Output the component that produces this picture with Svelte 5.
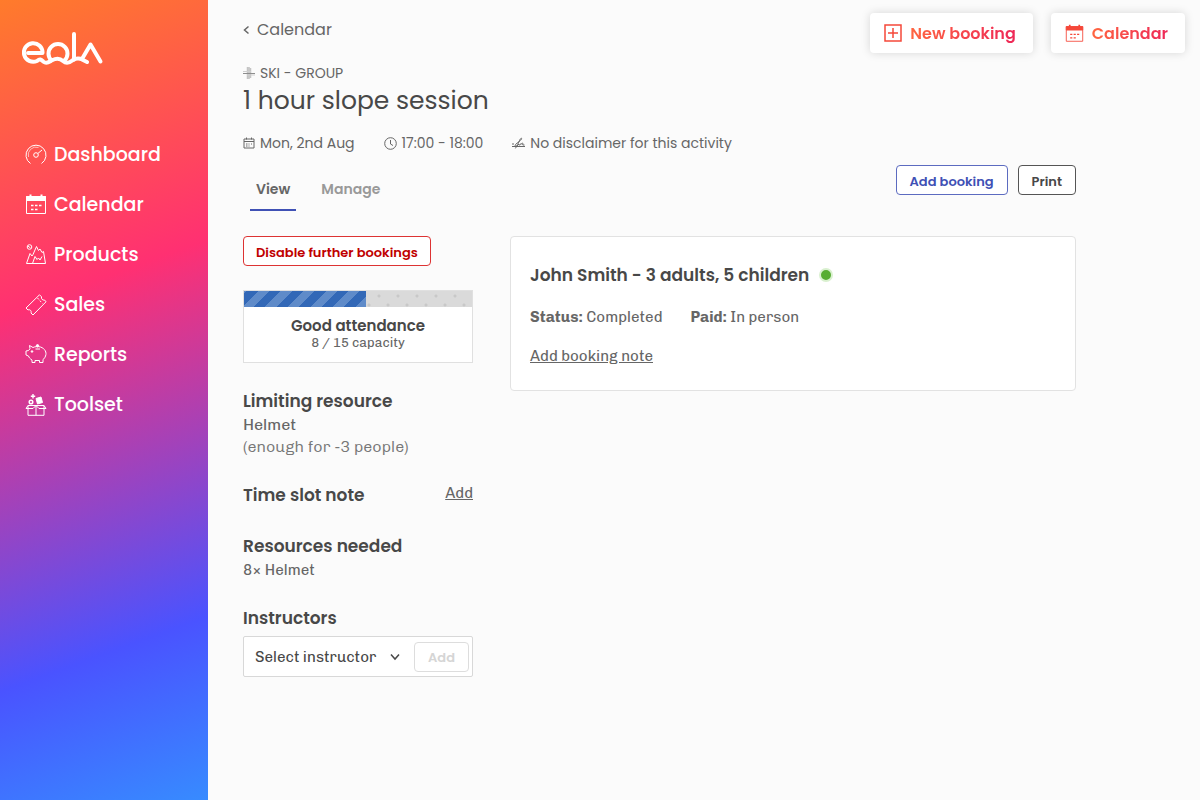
<script>
  const nav = [
    { name: "Dashboard", icon: "gauge" },
    { name: "Calendar", icon: "calendar" },
    { name: "Products", icon: "mountain" },
    { name: "Sales", icon: "ticket" },
    { name: "Reports", icon: "piggy" },
    { name: "Toolset", icon: "box" }
  ];

  const instructors = ["Select instructor"];

  let tab = $state("View");
  let instructor = $state("Select instructor");

  const booked = 8;
  const capacity = 15;
  let filled = $derived((booked / capacity) * 100);
</script>

{#snippet calendarIcon()}
  <path d="M1.5 2.500h19v17h-19z" />
  <path d="M1.5 2.500h19v4h-19z" fill="currentColor" />
  <path d="M5.5 .5v3M16.5 .5v3" stroke-width="2" />
  <path d="M6 11.500h2.500M10 11.500h2.500M14 11.500h2.500M6 15.500h2.500M10 15.500h2.500" stroke-width="1.6" />
{/snippet}

<div class="layout">
  <aside class="sidebar">
    <a class="logo" href="#home" aria-label="eola">
      <svg width="82" height="36" viewBox="0 0 82 36">
        <path d="M6 22H20.500A9.300 9.300 0 1 0 15 30C18 27.500 19 28.500 21.500 30.700C25 33.500 27.500 30.500 30 29.300C34 27.300 38 27.300 41 30C45 33.500 48 31.500 51 29C54 27 58 27 60 28.500L65 31" />
        <path d="M29.500 29.500A9.500 9.500 0 1 1 42.500 29.500" />
        <path d="M52 3V28.500M60 28L68.500 13.500L78.500 30.500" />
      </svg>
    </a>

    <nav>
      {#each nav as item}
        <a href="#{item.name.toLowerCase()}">
          <svg class="icon" width="22" height="22" viewBox="0 0 22 22">
            {#if item.icon === "gauge"}
              <path d="M5.500 19.500A10 10 0 1 1 16.500 19.500" />
              <path d="M3.500 13A7.800 7.800 0 0 1 13.500 3.500" stroke-opacity=".6" />
              <circle cx="11" cy="11" r="2.300" />
              <path d="M12.800 9.500L17 6" />
            {:else if item.icon === "calendar"}
              {@render calendarIcon()}
            {:else if item.icon === "mountain"}
              <circle cx="4.500" cy="3" r="2.300" />
              <path d="M3 2L5.500 4" />
              <path d="M1.500 19.500L5 9.500L7 12L8 10.500L11.500 2.500L13.500 6.500L15 5L17 8.500L18.500 7.500L20.500 19.500Z" />
              <path d="M7.500 19.500L10 12.500L12 15.500L13.500 14L15 16L17 12.500" />
            {:else if item.icon === "ticket"}
              <path d="M1 14L14.500 .8L16.500 2.800C16 4.800 17.500 6.500 19.500 6L21 7.800L8 21L6 19C6.800 17 5 15 3 16Z" />
              <path d="M12.500 4L17.500 9.500" stroke-dasharray="2 1.500" />
            {:else if item.icon === "piggy"}
              <path d="M4.500 1.500L8 3.500C10 2.500 13 2.300 15.500 3C20 4.500 22 8.500 20.500 12C20 13.800 19 14.800 18 15.500V18.500H14.500V16.500H10V18.500H7V16C5 14.800 4 13.500 3.500 12L1 11V7L3.500 6.500L5 4.800Z" />
              <circle cx="12.500" cy="1.800" r="1.200" fill="currentColor" />
              <circle cx="7" cy="7.500" r=".8" fill="currentColor" />
              <path d="M10.500 5H15" />
            {:else}
              <path d="M3 11.500H19V21.300H3ZM11 11.500V21.300M3 11.500L1 14.500H8L11 11.500L14 14.500H21L19 11.500" />
              <path d="M8 0V4.500M5.800 2.200H10.200" stroke-width="1.400" />
              <circle cx="6" cy="8" r="1.800" stroke-width="1.500" />
              <path d="M11 4.500L16 3L17.500 8.500L12.500 10Z" fill="currentColor" />
            {/if}
          </svg>
          {item.name}
        </a>
      {/each}
    </nav>
  </aside>

  <main>
    <header>
      <a class="back" href="#calendar">
        <svg class="icon chevron" width="7" height="10" viewBox="0 0 7 10"><path d="M5.500 1.500L1.500 5L5.500 8.500" /></svg>
        Calendar
      </a>
      <div class="quick">
        <button>
          <svg class="icon" width="18" height="18" viewBox="0 0 18 18"><path d="M1 1H17V17H1ZM9 4V14M4 9H14" stroke-width="1.500" /></svg>
          <span>New booking</span>
        </button>
        <button>
          <svg class="icon" width="19" height="19" viewBox="0 0 22 21">{@render calendarIcon()}</svg>
          <span>Calendar</span>
        </button>
      </div>
    </header>

    <div class="content">
      <p class="category">
        <svg width="12" height="12" viewBox="0 0 12 12">
          <path d="M4.500 0V12M7.500 1V11" stroke="#c4c4c4" stroke-width="1.500" />
          <path d="M6 0V12" stroke="#a5a5a5" />
          <path d="M0 6.500H12" stroke="#8d8d8d" />
          <path d="M0 4.500H8M4 8H12" stroke="#cfcfcf" />
        </svg>
        SKI - GROUP
      </p>
      <h1>1 hour slope session</h1>

      <div class="meta">
        <span>
          <svg class="icon" width="12" height="12" viewBox="0 0 12 12"><path d="M1 2H11V11H1ZM1 4.500H11M3.500 .5V2.500M8.500 .5V2.500M3 7H4.500M5.500 7H6.500M8 7H9M3 9H4.500M5.500 9H6.500" /></svg>
          Mon, 2nd Aug
        </span>
        <span>
          <svg class="icon" width="13" height="13" viewBox="0 0 13 13"><circle cx="6.500" cy="6.500" r="5.800" /><path d="M6.500 3V7L9 8.500" /></svg>
          17:00 - 18:00
        </span>
        <span>
          <svg class="icon" width="13" height="12" viewBox="0 0 13 12"><path d="M0 9.500H13M0 7H2M3 11.500C4 11 6 7 7.500 3.500C8.500 1 10 .5 9.500 2C8.500 4 5.500 5.500 3.500 7.500C2 9.500 5 10 7 7C7 8.500 8.500 8.500 9 6.500C9 8 11 5 10.800 6.500V8H12.500" /></svg>
          No disclaimer for this activity
        </span>
      </div>

      <div class="bar">
        <div class="tabs" role="tablist">
          {#each ["View", "Manage"] as t}
            <button role="tab" aria-selected={tab === t} class:active={tab === t} onclick={() => (tab = t)}>{t}</button>
          {/each}
        </div>
        <div class="actions">
          <button class="btn blue">Add booking</button>
          <button class="btn">Print</button>
        </div>
      </div>

      <div class="columns">
        <div class="side">
          <button class="btn red">Disable further bookings</button>

          <div class="attendance">
            <div class="progress"><div class="fill" style="width: {filled}%"></div></div>
            <strong>Good attendance</strong>
            <small>{booked} / {capacity} capacity</small>
          </div>

          <section class="limiting">
            <h2>Limiting resource</h2>
            <p>Helmet</p>
            <p class="light">(enough for -3 people)</p>
          </section>

          <section class="note">
            <h2>Time slot note</h2>
            <a href="#note">Add</a>
          </section>

          <section>
            <h2>Resources needed</h2>
            <p>{booked}× Helmet</p>
          </section>

          <section>
            <h2><label for="instructor">Instructors</label></h2>
            <div class="picker">
              <select id="instructor" bind:value={instructor}>
                {#each instructors as name}
                  <option>{name}</option>
                {/each}
              </select>
              <svg class="icon arrow" width="10" height="8" viewBox="0 0 10 8"><path d="M1 1.500L5 6L9 1.500" /></svg>
              <button class="btn" disabled>Add</button>
            </div>
          </section>
        </div>

        <article class="card">
          <h2>John Smith - 3 adults, 5 children <i class="dot"></i></h2>
          <div class="facts">
            <span><b>Status:</b> Completed</span>
            <span><b>Paid:</b> In person</span>
          </div>
          <a href="#booking-note">Add booking note</a>
        </article>
      </div>
    </div>
  </main>
</div>

<style>
  :global(body) {
    margin: 0;
    background: #fbfbfb;
  }
  .layout {
    display: grid;
    grid-template-columns: 208px 1fr;
    min-height: 100vh;
    font-family: Poppins, Inter, sans-serif;
    font-size: 14px;
    line-height: 20px;
    color: #666;
  }
  * { box-sizing: border-box; }
  h1, h2, p { margin: 0; }
  a { color: inherit; }
  button, select { font-family: inherit; cursor: pointer; }
  .icon {
    flex: none;
    fill: none;
    stroke: currentColor;
    stroke-width: 1;
  }

  .sidebar {
    background: linear-gradient(160deg, #ff7b2b 0%, #ff3072 36%, #4a53ff 79%, #378bff 100%);
    color: #fff;
  }
  .logo {
    display: block;
    padding: 31px 22px 0;
  }
  .logo svg {
    display: block;
    fill: none;
    stroke: #fff;
    stroke-width: 4;
    stroke-linecap: round;
    stroke-linejoin: round;
  }
  nav {
    display: flex;
    flex-direction: column;
    gap: 20px;
    padding: 73px 25px 30px;
  }
  nav a {
    display: flex;
    align-items: center;
    gap: 7px;
    font-size: 19px;
    font-weight: 500;
    line-height: 30px;
    text-decoration: none;
  }

  main { min-width: 0; }
  header {
    display: flex;
    justify-content: space-between;
    align-items: flex-start;
    padding: 13px 15px 0 35px;
  }
  .back {
    display: flex;
    align-items: center;
    gap: 7px;
    font-size: 16px;
    line-height: 34px;
    text-decoration: none;
  }
  .chevron { stroke-width: 1.5; }
  .quick {
    display: flex;
    gap: 18px;
  }
  .quick button {
    display: flex;
    align-items: center;
    gap: 8px;
    height: 40px;
    padding: 0 17px 0 14px;
    border: 0;
    border-radius: 4px;
    background: #fff;
    box-shadow: 0 0 10px rgba(0,0,0,0.15);
    color: #f5483a;
    font-size: 16px;
    font-weight: 600;
  }
  .quick span {
    background: linear-gradient(90deg, #ff6540, #ee2858);
    background-clip: text;
    color: transparent;
  }

  .content {
    max-width: 868px;
    padding: 10px 0 40px 35px;
  }
  .category {
    display: flex;
    align-items: center;
    gap: 5px;
  }
  h1 {
    font-size: 25px;
    font-weight: 400;
    line-height: 36px;
    color: #484848;
  }
  .meta {
    display: flex;
    gap: 29px;
    margin-top: 14px;
  }
  .meta span {
    display: flex;
    align-items: center;
    gap: 5px;
  }

  .bar {
    display: flex;
    justify-content: space-between;
    align-items: flex-start;
    margin-top: 12px;
  }
  .tabs {
    display: flex;
    gap: 19px;
    padding-left: 7px;
  }
  .tabs button {
    padding: 14px 6px 10px;
    border: 0;
    border-bottom: 2px solid transparent;
    background: none;
    color: #999;
    font-size: 14px;
    font-weight: 600;
    line-height: 20px;
  }
  .tabs .active {
    border-color: #3f51b5;
    color: #666;
  }
  .actions {
    display: flex;
    gap: 10px;
  }
  .btn {
    height: 30px;
    padding: 4px 12px 0;
    border: 1px solid #555;
    border-radius: 4px;
    background: #fff;
    color: #484848;
    font-size: 13px;
    font-weight: 600;
  }
  .actions .btn { padding: 4px 13px 0; }
  .blue { border-color: #5c6bc0; color: #3f51b5; }
  .red { border-color: #d33; color: #c00000; }
  .btn:disabled {
    border-color: #ddd;
    color: #d5d5d5;
    cursor: default;
  }

  .columns {
    display: grid;
    grid-template-columns: 230px 1fr;
    align-items: start;
    gap: 37px;
    margin-top: 25px;
    font-family: Chivo, Roboto, sans-serif;
    font-size: 15px;
    line-height: 22px;
  }
  .columns button, .columns strong, h2 { font-family: Poppins, Inter, sans-serif; }
  h2 {
    font-size: 17px;
    font-weight: 600;
    line-height: 26px;
    color: #484848;
  }
  .attendance {
    display: flex;
    flex-direction: column;
    align-items: center;
    margin: 24px 0 25px;
    padding-bottom: 13px;
    border: 1px solid #e0e0e0;
    background: #fff;
  }
  .attendance strong {
    margin-top: 8px;
    font-size: 15px;
    font-weight: 600;
    color: #484848;
  }
  .attendance small {
    font-size: 13px;
    line-height: 12px;
  }
  .progress {
    align-self: stretch;
    height: 16px;
    background:
      radial-gradient(circle at 2px 5px, #c8c8c8 1px, transparent 2px) 0 0 / 19px 19px,
      radial-gradient(circle at 11px 14px, #c8c8c8 1px, transparent 2px) 0 0 / 19px 19px,
      #dadada;
  }
  .fill {
    height: 100%;
    background: repeating-linear-gradient(135deg, #5f8bc9 0 2px, #3268b7 2px 10px, #5f8bc9 10px 16px);
  }
  section { margin-bottom: 24px; }
  .limiting p { font-size: 16px; }
  .limiting .light {
    font-weight: 300;
    color: #777;
  }
  .note {
    display: flex;
    justify-content: space-between;
    margin-bottom: 25px;
  }
  .picker {
    display: flex;
    align-items: center;
    margin-top: 5px;
    padding: 3px;
    height: 41px;
    border: 1px solid #d8d8d8;
    border-radius: 2px;
    background: #fff;
  }
  .picker select {
    flex: 1;
    min-width: 0;
    padding: 0 0 0 8px;
    appearance: none;
    border: 0;
    background: none;
    color: #484848;
    font-size: 15px;
  }
  .arrow {
    margin-right: 14px;
    stroke-width: 1.5;
    color: #484848;
  }
  .picker .btn {
    padding: 2px 13px 0;
  }

  .card {
    padding: 25px 19px 23px;
    border: 1px solid #e2e2e2;
    border-radius: 4px;
    background: #fff;
  }
  .card h2 {
    display: flex;
    align-items: center;
    gap: 10px;
  }
  .dot {
    width: 14px;
    height: 14px;
    border: 2px solid #d9f0cf;
    border-radius: 50%;
    background: #57ad31;
  }
  .facts {
    display: flex;
    gap: 28px;
    margin: 18px 0 17px;
  }
</style>
